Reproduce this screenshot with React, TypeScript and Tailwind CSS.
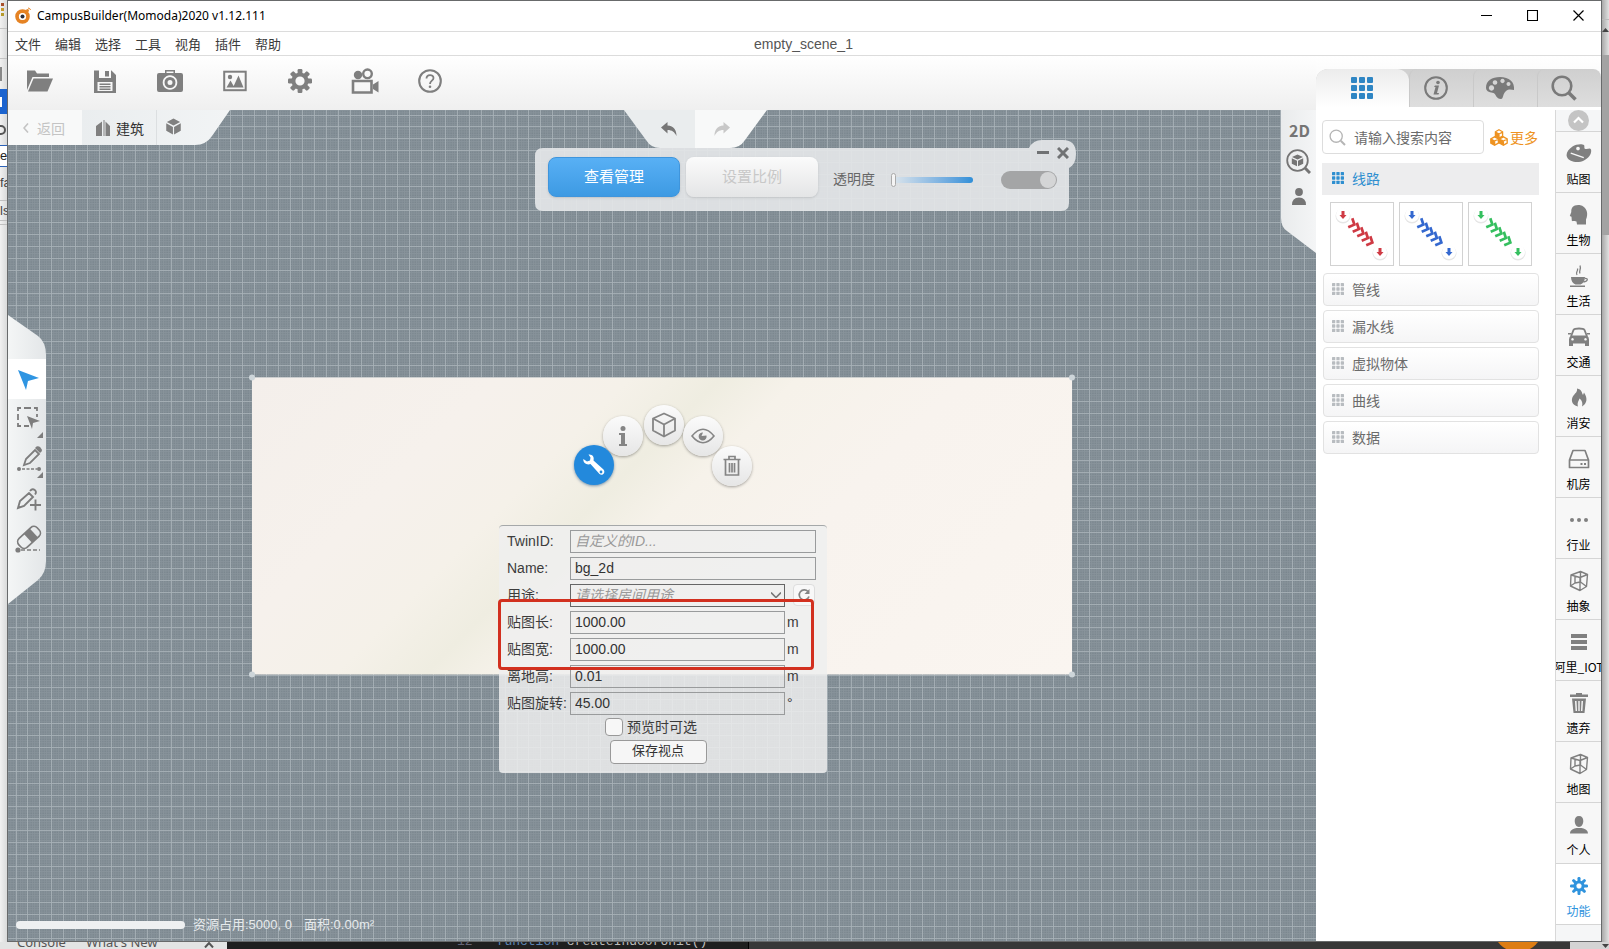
import type { ReactNode } from 'react'

const SANS = "font-['Liberation_Sans','Noto_Sans_CJK_SC',sans-serif]"
const CJK = "font-['Noto_Sans_CJK_SC',sans-serif]"

const MENUS = ['文件', '编辑', '选择', '工具', '视角', '插件', '帮助']
const SECTIONS = ['管线', '漏水线', '虚拟物体', '曲线', '数据']

type SvgProps = { w: number; h: number; children: ReactNode; className?: string; box?: string }

function Svg({ w, h, children, className, box }: SvgProps) {
  return (
    <svg width={w} height={h} viewBox={box ?? `0 0 ${w} ${h}`} fill="none" className={className} aria-hidden="true">
      {children}
    </svg>
  )
}

function Gear({ size, teeth = 8, hole = 4.6 }: { size: number; teeth?: number; hole?: number }) {
  return (
    <Svg w={size} h={size} box="0 0 24 24">
      {Array.from({ length: teeth }, (_, i) => (
        <rect key={i} x="9.6" y="0" width="4.8" height="6" rx="1.2" fill="currentColor" transform={`rotate(${(i * 360) / teeth} 12 12)`} />
      ))}
      <circle cx="12" cy="12" r={(hole + 8.6) / 2} stroke="currentColor" strokeWidth={8.6 - hole} />
    </Svg>
  )
}

function Dots({ size }: { size: number }) {
  return (
    <Svg w={size} h={size} box="0 0 22 22">
      {[0, 8, 16].flatMap((y) => [0, 8, 16].map((x) => <rect key={`${x}-${y}`} x={x} y={y} width="6" height="6" rx="1" fill="currentColor" />))}
    </Svg>
  )
}

function Cube({ size }: { size: number }) {
  return (
    <Svg w={size} h={size} box="0 0 18 18">
      <path d="M9 .5 16 4.2 9 8 2 4.2zM1.3 5.6 8.4 9.4v8L1.3 13.6zM16.7 5.6 9.6 9.4v8l7.1-3.8z" fill="currentColor" />
    </Svg>
  )
}

function WireCube() {
  return (
    <Svg w={20} h={22}>
      <path
        d="M2 5 11.500 1.500 18.500 4.500 17.500 16.500 11 20.500 1.500 16zM2 5l9 2.500 7.500-3M11 7.500v13M11.500 1.500V12L6 13V6M1.500 16l4.500-3M11.500 12l6 4.500"
        stroke="currentColor"
        strokeWidth="1.4"
        strokeLinejoin="round"
      />
    </Svg>
  )
}

function Trash({ w = 20, h = 22 }: { w?: number; h?: number }) {
  return (
    <Svg w={w} h={h} box="0 0 20 22">
      <path d="M1.500 4.500h17M7 4V1.500h6V4M3.500 5v15h13V5M7.500 8v9.500M10 8v9.500M12.500 8v9.500" stroke="currentColor" strokeWidth="1.7" />
    </Svg>
  )
}

function SolidTrash() {
  return (
    <Svg w={18} h={20}>
      <path fillRule="evenodd" d="M0 1.500h6V0h6v1.500h6V4H0zM2 5.500h14L14.500 20h-11zM5 8l.6 10H7L6.500 8zM8.300 8v10h1.400V8zM11.500 8 11 18h1.400L13 8z" fill="currentColor" />
    </Svg>
  )
}

function Lens({ size, stroke = 2.6 }: { size: number; stroke?: number }) {
  return (
    <Svg w={size} h={size} box="0 0 26 26">
      <circle cx="11" cy="11" r="9.300" stroke="currentColor" strokeWidth={stroke} />
      <path d="m18 18 6.500 6.500" stroke="currentColor" strokeWidth={stroke + 1} />
    </Svg>
  )
}

const TOOLS: { label: string; icon: ReactNode }[] = [
  {
    label: '打开',
    icon: (
      <Svg w={28} h={24}>
        <path d="M1 21V1.500h8l2 3h12V8H6.500z" fill="currentColor" />
        <path d="M7.500 9.500H27L21.500 22.500H2z" fill="currentColor" />
      </Svg>
    ),
  },
  {
    label: '保存',
    icon: (
      <Svg w={22} h={23}>
        <path fillRule="evenodd" d="M0 .5h17.500L22 5v18H0zM5 .5V8h12V.5zM3.500 12v9h15v-9z" fill="currentColor" />
        <path d="M11 1h4v5.500h-4zM5.500 13.500h11V15h-11zM5.500 16h11v1.500h-11zM5.500 18.500h11V20h-11z" fill="currentColor" />
      </Svg>
    ),
  },
  {
    label: '截图',
    icon: (
      <Svg w={26} h={24}>
        <path fillRule="evenodd" d="M2 4h6V1h10v3h6q2 0 2 2v15q0 2-2 2H2q-2 0-2-2V6q0-2 2-2zM9.500 2.500V4h7V2.500zM13 6.200a7.300 7.300 0 1 0 .01 0z" fill="currentColor" />
        <circle cx="13" cy="13.500" r="4" stroke="currentColor" strokeWidth="3" />
      </Svg>
    ),
  },
  {
    label: '图片',
    icon: (
      <Svg w={24} h={22}>
        <rect x="1.200" y="1.700" width="21.500" height="18.500" stroke="currentColor" strokeWidth="2" />
        <circle cx="7" cy="7" r="2.200" fill="currentColor" />
        <path d="m3.500 17.500 4-7 4 7zM10 17.500l5.500-12 5 12z" fill="currentColor" />
      </Svg>
    ),
  },
  { label: '设置', icon: <Gear size={24} /> },
  {
    label: '录像',
    icon: (
      <Svg w={28} h={26}>
        <circle cx="7" cy="7" r="4.200" fill="currentColor" />
        <circle cx="16.500" cy="5.800" r="4.300" stroke="currentColor" strokeWidth="2.400" />
        <path d="M2 13h18.500v11.500H2z" stroke="currentColor" strokeWidth="2.600" />
        <path d="M22 16.500 27.500 13v11.500L22 21z" fill="currentColor" />
      </Svg>
    ),
  },
  {
    label: '帮助',
    icon: (
      <Svg w={24} h={24}>
        <circle cx="12" cy="12" r="10.800" stroke="currentColor" strokeWidth="2.100" />
        <path d="M8.500 9.500C8.500 5 15.500 5 15.500 9c0 2.600-3.500 2.800-3.500 6" stroke="currentColor" strokeWidth="1.800" />
        <circle cx="12" cy="17.800" r="1.300" fill="currentColor" />
      </Svg>
    ),
  },
]

const RAIL: { label: string; icon: ReactNode }[] = [
  {
    label: '贴图',
    icon: (
      <Svg w={26} h={20}>
        <path fillRule="evenodd" d="M18 1c-2-1.500-8-1-11.500 1.500C2 5.500-.5 9.500 1 13c2 5 11 6.500 17 3.500 5-2.500 8-7 7-11-1-2-3 0-5.500-.5C17.500 4.500 19 2.500 18 1zM12 2.700a1.800 1.800 0 1 0 .01 0zM5 8.500l13 4.500-.5 1.200L4.500 9.700z" fill="currentColor" />
      </Svg>
    ),
  },
  {
    label: '生物',
    icon: (
      <Svg w={20} h={22}>
        <path d="M17 20.500V15.500c2.500-5 1.500-13-6.500-14.500C4 .5 2 4 2.300 8L.8 12l1.700.7.3 4c1.500 1 3.500.3 4.700.8l.5 3z" fill="currentColor" />
      </Svg>
    ),
  },
  {
    label: '生活',
    icon: (
      <Svg w={20} h={22}>
        <path d="M2 12h14c0 4-2 6.500-4.500 7.500h-5C4 18.500 2 16 2 12zM1 20.500h15V22H1z" fill="currentColor" />
        <path d="M16 13.500c3.500-.5 3 3-1.500 3.500M8 10c-2-3 1.500-3.500.5-6.500M11 8.500c-1.500-3 1.500-4 0-8" stroke="currentColor" strokeWidth="1.300" />
      </Svg>
    ),
  },
  {
    label: '交通',
    icon: (
      <Svg w={22} h={20}>
        <path d="M3 9.500 5.500 3q1-1.500 5.500-1.500T16.500 3L19 9.500" stroke="currentColor" strokeWidth="1.800" />
        <path fillRule="evenodd" d="M0 6h3v1.500H0zM19 6h3v1.500h-3zM3 8.500h16q2 1.500 2 4V19h-4v-2.500H5V19H1v-6.500q0-2.500 2-4zM4.500 11a1.300 1.300 0 1 0 .01 0zM17.500 11a1.300 1.300 0 1 0 .01 0z" fill="currentColor" />
      </Svg>
    ),
  },
  {
    label: '消安',
    icon: (
      <Svg w={18} h={22}>
        <path d="M7 1.500c5 1 4.500 4 6 6.500l1-2.500c4 6 3 11-2 14 1-3.500 0-6-2.500-8-1 3-2.500 4-1.500 8C1.500 18 .5 12.500 3.500 8.500 5.500 6 7.500 5 7 1.500z" fill="currentColor" />
      </Svg>
    ),
  },
  {
    label: '机房',
    icon: (
      <Svg w={22} h={20}>
        <path d="M1.500 11 5 1.500h12L20.500 11v7.500h-19zM1.500 11h19" stroke="currentColor" strokeWidth="1.700" strokeLinejoin="round" />
        <path d="M12.500 14h2v2h-2zM16 14h2v2h-2z" fill="currentColor" />
      </Svg>
    ),
  },
  {
    label: '行业',
    icon: (
      <Svg w={20} h={20}>
        <circle cx="3" cy="10" r="2" fill="currentColor" />
        <circle cx="10" cy="10" r="2" fill="currentColor" />
        <circle cx="17" cy="10" r="2" fill="currentColor" />
      </Svg>
    ),
  },
  { label: '抽象', icon: <WireCube /> },
  {
    label: '阿里_IOT',
    icon: (
      <Svg w={16} h={16}>
        <path d="M0 0h16v4H0zM0 6h16v4H0zM0 12h16v4H0z" fill="currentColor" />
      </Svg>
    ),
  },
  { label: '遗弃', icon: <SolidTrash /> },
  { label: '地图', icon: <WireCube /> },
  {
    label: '个人',
    icon: (
      <Svg w={20} h={20}>
        <path d="M10 1c3 0 4.300 2 4.300 5S12.500 12 10 12 5.700 9 5.700 6 7 1 10 1zM1 18.500c0-4 4-5 6.500-5.500h5c2.500.5 6.500 1.500 6.500 5.500z" fill="currentColor" />
      </Svg>
    ),
  },
  {
    label: '功能',
    icon: (
      <Svg w={20} h={20}>
        {[0, 45, 90, 135, 180, 225, 270, 315].map((a) => (
          <rect key={a} x="8.500" y="1" width="3" height="6.500" rx="1.200" fill="currentColor" transform={`rotate(${a} 10 10)`} />
        ))}
        <circle cx="10" cy="10" r="4.300" stroke="currentColor" strokeWidth="2.600" />
      </Svg>
    ),
  },
]

function Grid() {
  const cols = Array.from({ length: 240 }, (_, i) => Math.round(7.5 + i * 11.93))
  const rows = Array.from({ length: 140 }, (_, i) => Math.round(4.5 + i * 11.93))
  return (
    <svg className="absolute inset-0 h-full w-full" aria-hidden="true">
      <defs>
        <pattern id="fine" width="2.386" height="2.386" patternUnits="userSpaceOnUse">
          <path d="M0 .5h2.386M.5 0v2.386" stroke="#9ba5ac" strokeWidth="1" opacity=".42" />
        </pattern>
      </defs>
      <rect width="100%" height="100%" fill="#7a868e" />
      <rect width="100%" height="100%" fill="url(#fine)" />
      {cols.map((x) => (
        <rect key={`c${x}`} x={x} y="0" width="1" height="100%" fill="#a8b2b7" opacity=".85" />
      ))}
      {rows.map((y) => (
        <rect key={`r${y}`} x="0" y={y} width="100%" height="1" fill="#a8b2b7" opacity=".85" />
      ))}
    </svg>
  )
}

function Breadcrumb() {
  return (
    <nav className={`absolute left-0 top-0 flex h-[35px] w-[223px] bg-gradient-to-r from-[#e6eaec] to-[#f2f4f5] text-sm [clip-path:path('M0_0H222L204_26Q198_35_187_35H0Z')] ${CJK}`}>
      <button className="flex w-[74px] items-center gap-2 bg-[#f8f9f9] pl-[15px] text-[#c4c4c4]">
        <Svg w={6} h={10}>
          <path d="M5 .5 1 5l4 4.500" stroke="currentColor" strokeWidth="1.600" />
        </Svg>
        返回
      </button>
      <button className="flex items-center gap-1.5 pl-3.5 text-[#333]">
        <Svg w={14} h={16} className="text-[#808080]">
          <path d="M0 16V6l6-4.500V16zM7.500 0h1v16h-1zM9.500 1.500 14 6v10H9.500z" fill="currentColor" />
        </Svg>
        建筑
      </button>
      <button aria-label="物体" className="ml-3 flex items-center border-l border-[#dcdfe1] pb-0.5 pl-2 text-[#808080]">
        <Cube size={17} />
      </button>
    </nav>
  )
}

function UndoRedo() {
  const arrow = 'M6.500 0v3.500C13 4 15.500 8 15.500 14 13.500 10 11 8 6.500 8v3.500L0 5.500z'
  return (
    <div className="absolute left-1/2 top-0 -ml-[38px] flex h-[38px] w-[143px] [clip-path:path('M0_0H143L121_30Q116_38_106_38H36Q27_38_22_30Z')]">
      <button aria-label="撤销" className="flex w-[71px] items-center justify-end bg-[#eaedee] pr-[17px] text-[#777]">
        <Svg w={17} h={14}>
          <path d={arrow} fill="currentColor" />
        </Svg>
      </button>
      <button aria-label="重做" className="flex flex-1 items-center bg-[#f8f9f9] pl-[18px] text-[#c8c8c8]">
        <Svg w={17} h={14} className="-scale-x-100">
          <path d={arrow} fill="currentColor" />
        </Svg>
      </button>
    </div>
  )
}

function SceneBar() {
  return (
    <div
      className={`absolute left-1/2 top-[30px] -ml-[127px] flex h-[71px] w-[542px] items-center bg-[#e4e6e8]/92 pl-[13px] pt-2 text-sm [clip-path:path('M8_8H494Q498_0_507_0H528Q541_0_541_14Q541_24_534_28V63Q534_71_526_71H8Q0_71_0_63V16Q0_8_8_8Z')] ${CJK}`}
    >
      <div className="flex gap-1.5 pb-1.5 text-[15px]">
        <button className="h-10 w-[132px] rounded-lg border border-[#3f95dc] bg-gradient-to-b from-[#58b0f5] to-[#3d9ae3] pb-0.5 text-white shadow-sm">查看管理</button>
        <button className="h-10 w-[132px] rounded-lg bg-gradient-to-b from-[#fbfbfb] to-[#e4e5e6] pb-0.5 text-[#c8c8c8] shadow-sm">设置比例</button>
      </div>
      <label htmlFor="opacity" className="ml-[15px] pb-1 text-[#666]">
        透明度
      </label>
      <input
        id="opacity"
        type="range"
        defaultValue={0}
        className="ml-4 h-4 w-[82px] appearance-none bg-transparent [&::-webkit-slider-runnable-track]:h-1.5 [&::-webkit-slider-runnable-track]:rounded-full [&::-webkit-slider-runnable-track]:bg-gradient-to-r [&::-webkit-slider-runnable-track]:from-[#dfe6eb] [&::-webkit-slider-runnable-track]:to-[#2f8fd8] [&::-webkit-slider-thumb]:-mt-1 [&::-webkit-slider-thumb]:h-3.5 [&::-webkit-slider-thumb]:w-[5px] [&::-webkit-slider-thumb]:appearance-none [&::-webkit-slider-thumb]:rounded-sm [&::-webkit-slider-thumb]:border [&::-webkit-slider-thumb]:border-[#aaa] [&::-webkit-slider-thumb]:bg-[#f4f4f4]"
      />
      <input
        type="checkbox"
        role="switch"
        aria-label="显示"
        defaultChecked
        className="ml-7 flex h-[18px] w-14 appearance-none justify-end rounded-full bg-[#a4a5a6] p-px before:h-4 before:w-4 before:rounded-full before:bg-[#d4d5d6]"
      />
      <div className="absolute right-2 top-[7px] flex items-center gap-2 text-[#707274]">
        <button aria-label="最小化面板">
          <Svg w={12} h={12}>
            <path d="M0 5.500h12" stroke="currentColor" strokeWidth="3" />
          </Svg>
        </button>
        <button aria-label="关闭面板">
          <Svg w={12} h={12}>
            <path d="m1 1 10 10M11 1 1 11" stroke="currentColor" strokeWidth="3" />
          </Svg>
        </button>
      </div>
    </div>
  )
}

function SideTools() {
  return (
    <div className="absolute left-0 top-[205px] flex h-[289px] w-[38px] flex-col bg-gradient-to-r from-[#f4f6f6] to-[#e3e6e8] pt-11 text-[#7d7d7d] [clip-path:path('M0_0L30_21Q38_27_38_40V246Q38_258_30_265L0_289Z')]">
      <button aria-label="选择" className="flex h-10 justify-center bg-white pt-2.5 text-[#2f95e2]">
        <Svg w={22} h={22} className="ml-1">
          <path d="M0 1 21 9 10 12 8 21z" fill="currentColor" />
        </Svg>
      </button>
      <button aria-label="框选" className="flex h-10 pl-1">
        <Svg w={34} h={40}>
          <path d="M6 12V9h3M12 9h7M22 9h3v3M6 15v6M6 24v3h3M12 27h5M25 15v3" stroke="currentColor" strokeWidth="1.800" />
          <path d="m15 17 13 5-7 2-1 6z" fill="currentColor" />
          <path d="M31 33v6h-6z" fill="currentColor" />
        </Svg>
      </button>
      <button aria-label="画线" className="flex h-10 pl-1">
        <Svg w={34} h={40}>
          <path d="m12 26 2-6 9-9 4 4-9 9z" stroke="currentColor" strokeWidth="1.800" />
          <path d="m23 9 1.500-1.500q2-1 4 1t1 4L28 14z" fill="currentColor" />
          <circle cx="7" cy="30" r="2" fill="currentColor" />
          <circle cx="27" cy="30" r="2" fill="currentColor" />
          <path d="M10 30h15" stroke="currentColor" strokeWidth="1.600" strokeDasharray="3 1.500" />
          <path d="M31 33v6h-6z" fill="currentColor" />
        </Svg>
      </button>
      <button aria-label="添加点" className="flex h-10 pl-1">
        <Svg w={34} h={40}>
          <path d="m6 29 2-7 9-8 4 4-9 9zM18 12c3-4 8 0 5 3.500M18 26h11M23.500 20.500v11" stroke="currentColor" strokeWidth="1.900" />
        </Svg>
      </button>
      <button aria-label="擦除" className="flex h-10 pl-1">
        <Svg w={34} h={40}>
          <g transform="rotate(-43 16 18)">
            <rect x="4" y="13" width="25" height="12" rx="4.500" stroke="currentColor" strokeWidth="1.700" />
            <path d="M15 13h8v12h-8z" fill="currentColor" />
          </g>
          <circle cx="6" cy="31" r="2.600" fill="currentColor" />
          <path d="M9 31h19" stroke="currentColor" strokeWidth="1.700" strokeDasharray="4 2" />
        </Svg>
      </button>
    </div>
  )
}

function ViewTools() {
  return (
    <div className={`absolute right-0 top-0 flex h-[143px] w-[35px] flex-col items-center bg-gradient-to-r from-[#e9ebec] to-[#f4f5f6] pt-2 text-[#757575] [clip-path:path('M0_0H35V143L6_121Q0_117_0_108Z')] ${CJK}`}>
      <button className="h-6 pl-0.5 text-base leading-6 font-bold">2D</button>
      <button aria-label="查找物体" className="mt-[7px]">
        <Svg w={25} h={25}>
          <circle cx="11.500" cy="11.500" r="10.300" stroke="currentColor" strokeWidth="1.800" />
          <path d="M11.500 5.500 17 8l-5.500 2.500L6 8zM5.800 9.300l5.200 2.400v5.600l-5.200-2.500zM17.200 9.300 12 11.700v5.600l5.200-2.500z" fill="currentColor" />
          <path d="m19 19 5 5" stroke="currentColor" strokeWidth="3" />
        </Svg>
      </button>
      <button aria-label="第一人称" className="mt-3.5">
        <Svg w={16} h={17}>
          <circle cx="8" cy="4" r="3.900" fill="currentColor" />
          <path d="M1 17q0-7.500 7-7.500t7 7.500z" fill="currentColor" />
        </Svg>
      </button>
    </div>
  )
}

// Positions on the ring, from the centre of the canvas
const RING: { label: string; x: number; y: number; icon: ReactNode }[] = [
  {
    label: '信息',
    x: -39,
    y: -90,
    icon: (
      <Svg w={10} h={20}>
        <circle cx="5" cy="2.500" r="2.500" fill="currentColor" />
        <path d="M1 7h6v11h2v2H1v-2h2V9H1z" fill="currentColor" />
      </Svg>
    ),
  },
  {
    label: '模型',
    x: 2,
    y: -101,
    icon: (
      <Svg w={24} h={26}>
        <path d="M12 1.500 23 6.500v12L12 24.500 1 18.500v-12zM1 6.500l11 6 11-6M12 12.500v12" stroke="currentColor" strokeWidth="1.800" strokeLinejoin="round" />
      </Svg>
    ),
  },
  {
    label: '显示',
    x: 41,
    y: -90,
    icon: (
      <Svg w={24} h={16}>
        <path d="M1 8q11-13.500 22 0-11 13.500-22 0z" stroke="currentColor" strokeWidth="1.600" />
        <path d="M12 4.500 10.500 8 15.500 7.500a4 4 0 1 1-3.500-3z" fill="currentColor" />
      </Svg>
    ),
  },
  { label: '删除', x: 70, y: -60, icon: <Trash w={20} h={22} /> },
]

function RingMenu() {
  return (
    <>
      {RING.map((r) => (
        <button
          key={r.label}
          aria-label={r.label}
          className="absolute left-1/2 top-1/2 flex h-10 w-10 items-center justify-center rounded-full bg-gradient-to-b from-[#fbfbfb] to-[#e6e6e6] text-[#858585] shadow-[0_1px_3px_rgba(0,0,0,0.35)]"
          style={{ marginLeft: r.x - 20, marginTop: r.y - 20 }}
        >
          {r.icon}
        </button>
      ))}
      <button aria-label="属性" className="absolute left-1/2 top-1/2 -ml-[88px] -mt-[81px] flex h-10 w-10 items-center justify-center rounded-full bg-[#2389dc] text-white shadow-[0_1px_3px_rgba(0,60,120,0.5)]">
        <Svg w={24} h={24}>
          <path
            d="M6.500 1.500C10.500 1 12.500 4 11.500 7.500L21.500 16.500C24 19.500 20.500 23.500 17.500 21L8.500 11C5 12.500 1 10 1.300 6L5 8.500 8 7.500 8.500 4.500z"
            fill="currentColor"
          />
          <circle cx="19" cy="19" r="1.400" fill="#2389dc" />
        </Svg>
      </button>
    </>
  )
}

const FIELD = 'h-[23px] min-w-0 border border-[#999b9c] bg-transparent px-1 text-sm text-[#333] outline-none placeholder:italic placeholder:text-[#999]'

function Field({ id, label, value, unit }: { id: string; label: string; value: string; unit: string }) {
  return (
    <>
      <label htmlFor={id} className="whitespace-nowrap">
        {label}
      </label>
      <input id={id} defaultValue={value} className={FIELD} />
      <span className="pl-0.5">{unit}</span>
    </>
  )
}

function Properties() {
  return (
    <form className={`absolute left-1/2 top-1/2 -ml-[163px] -mt-px h-[248px] w-[328px] rounded border-t border-[#a5a8a9] bg-[#efefef]/85 px-2 pt-1 text-sm text-[#3c3c3c] ${SANS}`}>
      <div className="grid auto-rows-[23px] grid-cols-[63px_215px_31px] items-center gap-y-1">
        <label htmlFor="twin">TwinID:</label>
        <input id="twin" placeholder="自定义的ID..." className={`col-span-2 ${FIELD}`} />
        <label htmlFor="name">Name:</label>
        <input id="name" defaultValue="bg_2d" className={`col-span-2 ${FIELD}`} />
        <label htmlFor="usage">用途:</label>
        <div className="relative flex">
          <select id="usage" className="h-[23px] w-full appearance-none border border-[#666] px-1 text-sm text-[#999] italic outline-none">
            <option>请选择房间用途</option>
          </select>
          <Svg w={10} h={6} className="absolute right-1 top-2 text-[#777]">
            <path d="m0 .5 5 5 5-5" stroke="currentColor" strokeWidth="1.600" />
          </Svg>
        </div>
        <button type="button" aria-label="刷新" className="ml-2 flex h-[22px] w-[22px] items-center justify-center rounded border border-[#ddd] bg-[#f8f8f8] text-[#858585]">
          <Svg w={14} h={14}>
            <path d="M11 3.500A5 5 0 1 0 12 8.500" stroke="currentColor" strokeWidth="1.700" />
            <path d="M12.500 1v5h-5z" fill="currentColor" />
          </Svg>
        </button>
        <Field id="len" label="贴图长:" value="1000.00" unit="m" />
        <Field id="wid" label="贴图宽:" value="1000.00" unit="m" />
        <Field id="ele" label="离地高:" value="0.01" unit="m" />
        <Field id="rot" label="贴图旋转:" value="45.00" unit="°" />
      </div>
      <label className="mt-[3px] flex h-[18px] items-center justify-center gap-1 pr-6">
        <input type="checkbox" className="h-[18px] w-[18px] appearance-none rounded-sm border border-[#999] bg-[#f7f7f7]" />
        预览时可选
      </label>
      <div className="mt-1 flex justify-center pr-2.5">
        <button type="button" className="h-6 w-[97px] rounded-sm border border-[#999] bg-[#f6f6f6] text-[13px] text-[#333]">
          保存视点
        </button>
      </div>
      <div className="pointer-events-none absolute -left-px top-[73px] h-[71px] w-[316px] rounded-sm border-3 border-[#d2301f]" />
    </form>
  )
}

function Viewport() {
  return (
    <main className="relative min-h-0 flex-1 overflow-hidden">
      <Grid />
      <div className="absolute left-1/2 top-1/2 h-[297px] w-[820px] -translate-x-1/2 -translate-y-1/2 bg-[linear-gradient(135deg,#f4efeb_0%,#f6f1ec_22%,#f5f1e9_34%,#efede1_42%,#f6f2ea_49%,#f8f3ee_64%,#faf5f0_100%)]">
        <i className="absolute -left-[3px] -top-[3px] h-1.5 w-1.5 rounded-full bg-[#cdd5d9]" />
        <i className="absolute -right-[3px] -top-[3px] h-1.5 w-1.5 rounded-full bg-[#cdd5d9]" />
        <i className="absolute -bottom-[3px] -left-[3px] h-1.5 w-1.5 rounded-full bg-[#cdd5d9]" />
        <i className="absolute -bottom-[3px] -right-[3px] h-1.5 w-1.5 rounded-full bg-[#cdd5d9]" />
      </div>
      <Breadcrumb />
      <UndoRedo />
      <SceneBar />
      <SideTools />
      <ViewTools />
      <RingMenu />
      <Properties />
      <div className={`absolute bottom-1.5 left-2 flex items-center text-[13px] leading-5 text-[#e6eaec] ${SANS}`}>
        <div className="h-2 w-[169px] rounded-full bg-[#eef0f1]" />
        <span className="ml-2">资源占用:5000, 0</span>
        <span className="ml-3">面积:0.00m²</span>
      </div>
    </main>
  )
}

function LineTile({ label, color }: { label: string; color: string }) {
  return (
    <button aria-label={label} className="h-16 w-16 border border-[#d2d2d2] bg-white">
      <Svg w={62} h={62}>
        {[12, 49].map((p) => (
          <g key={p}>
            <circle cx={p} cy={p + 1} r="7.500" fill="#e6e6e6" />
            <circle cx={p} cy={p} r="7" fill="#fff" />
            <path d={`M${p - 1.5} ${p - 4}h3v4h2l-3.500 4-3.500-4h2z`} fill={color} />
          </g>
        ))}
        {[0, 1, 2, 3, 4].map((i) => (
          <path key={i} d="m-3-5 4.500 5-4.500 5" transform={`translate(${22 + i * 4.5} ${21 + i * 4.5}) rotate(24)`} stroke={color} strokeWidth="2.700" />
        ))}
      </Svg>
    </button>
  )
}

const TAB = 'flex flex-1 items-center justify-center rounded-t-lg border-l border-[#c9c9c9] bg-gradient-to-b from-[#cfcfcf] to-[#dedede] pr-3 text-[#7a7a7a]'

function Library() {
  return (
    <aside className="flex w-[285px] shrink-0 flex-col bg-white">
      <div className="flex h-[51px] bg-gradient-to-b from-white to-[#f3f3f3] pt-[13px]">
        <div className="flex flex-1 rounded-t-xl bg-[#d0d0d0]">
          <button aria-label="资源库" className="flex w-[93px] items-center justify-center rounded-t-xl bg-gradient-to-b from-[#ececec] to-white pr-px text-[#2f86c4]">
            <Dots size={22} />
          </button>
          <button aria-label="信息" className={TAB}>
            <Svg w={24} h={24}>
              <circle cx="12" cy="12" r="10.800" stroke="currentColor" strokeWidth="2.100" />
              <path d="M11 9.500h4L13 17h2l-.5 1.500h-5l2-7.500H10z" fill="currentColor" />
              <circle cx="14" cy="6.500" r="1.800" fill="currentColor" />
            </Svg>
          </button>
          <button aria-label="材质" className={TAB}>
            <Svg w={30} h={24}>
              <path
                fillRule="evenodd"
                d="M15 1C7 1 1 5 1 11.500c0 5 5 4.500 7.500 5.500S11 23 16 23c2.500 0 1.500-5 5-8 3-2.500 6-1 8-1C30 6 24 1 15 1zM6.500 9.300a2.700 2.700 0 1 0 .01 0zM10 4.200a2.300 2.300 0 1 0 .01 0zM17.500 2.800a2.200 2.200 0 1 0 .01 0zM23.500 6a2 2 0 1 0 .01 0z"
                fill="currentColor"
              />
            </Svg>
          </button>
          <button aria-label="搜索" className={TAB}>
            <Lens size={26} />
          </button>
        </div>
      </div>
      <div className="flex min-h-0 flex-1 pt-[3px]">
        <div className={`flex-1 pl-1.5 pr-4 pt-2.5 text-sm ${CJK}`}>
          <div className="flex items-center">
            <label className="flex h-[34px] w-[162px] items-center rounded border border-[#ddd] pl-1.5 text-[#b5b5b5]">
              <Lens size={17} stroke={2} />
              <input aria-label="搜索" placeholder="请输入搜索内容" className="ml-2 w-[120px] outline-none placeholder:text-[#6b6b6b]" />
            </label>
            <a href="#more" className="ml-1.5 flex items-center gap-0.5 text-[#ee9322]">
              <Svg w={18} h={17}>
                <path d="M5.400 2.800 9 5v4L5.400 7.200zM.8 9.800 4.600 12v4.200L.8 14.200zM9.600 9.800l3.800 2.200v4.200l-3.800-2z" fill="currentColor" />
                <path d="m9 .8 3.600 2v4.400L9 9 5.400 7.200V2.800zM4.600 7.800l3.800 2v4.400l-3.800 2-3.800-2V9.800zM13.400 7.800l3.800 2v4.400l-3.800 2-3.800-2V9.800zM5.400 3 9 5l3.600-2M9 5v4M1 10l3.600 2L8.400 10M4.600 12v4M9.600 10l3.800 2 3.800-2M13.400 12v4" stroke="currentColor" strokeWidth="1.300" />
              </Svg>
              更多
            </a>
          </div>
          <button className="mt-[9px] flex h-8 w-full items-center gap-2 bg-[#ededee] pb-0.5 pl-2.5 text-[#2f8fd0]">
            <Dots size={12} />
            线路
          </button>
          <div className="my-[7px] flex gap-[5px] pl-2">
            <LineTile label="红色线路" color="#cf3a44" />
            <LineTile label="蓝色线路" color="#3468cf" />
            <LineTile label="绿色线路" color="#35bf5f" />
          </div>
          <div className="flex flex-col gap-1 pl-px">
            {SECTIONS.map((s) => (
              <button key={s} className="flex h-[33px] items-center gap-2 rounded-sm border border-[#e2e2e2] bg-gradient-to-b from-white to-[#f5f5f6] pb-0.5 pl-2 text-[#6b6b6b]">
                <span className="text-[#b8bcc0]">
                  <Dots size={12} />
                </span>
                {s}
              </button>
            ))}
          </div>
        </div>
        <div className={`flex w-[46px] flex-col border-l border-[#d8d8d8] bg-[#f5f6f7] text-xs text-black ${CJK}`}>
          <button aria-label="向上" className="flex h-[21px] justify-center">
            <Svg w={21} h={21}>
              <circle cx="10.500" cy="10.500" r="10.500" fill="#c4c4c4" />
              <path d="m6 12.500 4.500-4.500 4.500 4.500" stroke="#fff" strokeWidth="2.200" />
            </Svg>
          </button>
          {RAIL.map((r) => (
            <button
              key={r.label}
              className={`flex h-[61px] flex-col items-center overflow-hidden border-t border-[#d5d5d5] ${r.label === '功能' ? 'bg-white text-[#2f93dd]' : 'bg-[#f7f7f7]'}`}
            >
              <span className={`flex h-11 items-center ${r.label === '功能' ? '' : 'text-[#808080]'}`}>{r.icon}</span>
              <span className="-mt-[5px] leading-4 whitespace-nowrap">{r.label}</span>
            </button>
          ))}
          <div className="border-t border-[#d5d5d5]" />
        </div>
      </div>
    </aside>
  )
}

function TitleBar() {
  return (
    <header className="flex h-[31px] items-center border-b border-[#dcdcdc] bg-white pb-px pl-[7px] font-['Noto_Sans',sans-serif] text-black">
      <Svg w={16} h={17}>
        <circle cx="7.500" cy="9.500" r="5.300" stroke="#e58324" strokeWidth="4" />
        <circle cx="7.500" cy="9.500" r="3.600" fill="#fff" />
        <circle cx="7.500" cy="9.500" r="2" fill="#2a2f3d" />
        <circle cx="12.500" cy="3.500" r="1.500" fill="#e58324" />
        <path d="M13 1q2 0 2.500 2" stroke="#e58324" />
      </Svg>
      <h1 className="ml-1.5 flex-1 text-xs">CampusBuilder(Momoda)2020 v1.12.111</h1>
      <div className="flex">
        <button aria-label="最小化" className="flex w-[45px] justify-center">
          <Svg w={11} h={11}>
            <path d="M0 5.500h11" stroke="#000" />
          </Svg>
        </button>
        <button aria-label="最大化" className="flex w-[46px] justify-center">
          <Svg w={11} h={11}>
            <path d="M.5.500h10v10H.5z" stroke="#000" strokeWidth="1.200" />
          </Svg>
        </button>
        <button aria-label="关闭" className="flex w-[46px] justify-center">
          <Svg w={11} h={11}>
            <path d="m.5.500 10 10M10.500.500l-10 10" stroke="#000" strokeWidth="1.200" />
          </Svg>
        </button>
      </div>
    </header>
  )
}

function BehindLeft() {
  return (
    <div className="flex w-[7px] shrink-0 flex-col overflow-hidden bg-gradient-to-r from-[#f1f1f1] to-[#d9dada] text-[13px] text-[#444]">
      <div className="flex h-7 flex-col gap-0.5 pl-px pt-[3px]">
        <i className="h-[3px] w-[3px] bg-[#a8502c]" />
        <i className="h-[3px] w-[3px] bg-[#c79a2e]" />
        <i className="h-[3px] w-[3px] bg-[#b59a2c]" />
      </div>
      <div className="h-[31px] border-y border-[#c4c4c4]" />
      <div className="h-[30px] py-2">
        <i className="block h-3.5 w-0.5 bg-[#888]" />
      </div>
      <div className="flex h-[25px] items-center bg-[#1c64cf]">
        <i className="h-2.5 w-0.5 bg-white" />
      </div>
      <div className="flex h-[31px] items-center">
        <i className="-ml-1 h-2.5 w-2.5 shrink-0 rounded-full border-2 border-[#555]" />
      </div>
      <div className="h-[22px] border-y border-[#2b62b8] bg-white leading-5 text-[#222]">er</div>
      <div className="h-[33px] leading-8">fa</div>
      <div className="h-[21px] border-y border-[#c0c0c0] leading-5">ls</div>
      <div className="h-1 border-b border-[#c0c0c0]" />
    </div>
  )
}

function BehindRight() {
  return (
    <div className="flex w-[7px] shrink-0 flex-col bg-gradient-to-r from-[#a9a9a9] to-[#e2e2e2]">
      <div className="h-5 border-b border-[#bbb]" />
      <div className="flex h-[35px] items-start justify-end pt-2">
        <Svg w={7} h={4}>
          <path d="M0 4 3.500 0 7 4z" fill="#444" />
        </Svg>
      </div>
      <div className="h-[180px] bg-[#a3a3a3]" />
    </div>
  )
}

function BehindBottom() {
  return (
    <div className="flex h-[7px] shrink-0 items-end overflow-hidden bg-[#1f1f1f] text-[13px] leading-[14px] text-[#555]">
      <div className="flex h-full w-[227px] items-end bg-[#e3e4e4] pl-[17px] font-['Noto_Sans',sans-serif]">
        <span>Console</span>
        <span className="ml-5">What's New</span>
        <Svg w={10} h={6} className="mb-px ml-[46px]">
          <path d="m1 5.500 4-4.500 4 4.500" stroke="#555" strokeWidth="2" />
        </Svg>
      </div>
      <div className="flex h-full w-[522px] items-end border-r border-black pl-[230px] font-['Liberation_Mono',monospace] text-[#bbb]">
        <span className="mr-6 text-[#667]">12</span>
        <span className="whitespace-pre">
          <span className="text-[#5d86b5]">function</span> createIndoorUnit()
        </span>
      </div>
      <div className="flex h-full flex-1 items-end justify-end overflow-hidden bg-[#383838] pr-[27px]">
        <i className="-mb-[3px] h-[50px] w-[50px] shrink-0 rounded-full bg-[#dd7d14]" />
      </div>
      <div className="flex h-full w-[39px] items-end justify-end bg-[#d4d4d4]">
        <Svg w={7} h={4} className="mb-px">
          <path d="M0 0h7L3.500 4z" fill="#444" />
        </Svg>
      </div>
    </div>
  )
}

export default function App() {
  return (
    <div className={`flex h-screen flex-col overflow-hidden ${SANS}`}>
      <div className="flex min-h-0 flex-1">
        <BehindLeft />
        <div className="flex min-w-0 flex-1 flex-col border border-[#686a6b] bg-white">
          <TitleBar />
          <div className="relative flex h-6 shrink-0 items-center justify-center border-b border-[#dcdcdc] pr-0.5">
            <nav className={`absolute left-[7px] flex gap-[14px] text-[13px] text-[#3a3a3a] ${CJK}`}>
              {MENUS.map((m) => (
                <button key={m}>{m}</button>
              ))}
            </nav>
            <span className="text-sm text-[#555]">empty_scene_1</span>
          </div>
          <div className="flex min-h-0 flex-1">
            <div className="flex min-w-0 flex-1 flex-col">
              <div className="flex h-[54px] shrink-0 bg-gradient-to-b from-white to-[#efefef] text-[#7f7f7f]">
                {TOOLS.map((t) => (
                  <button key={t.label} aria-label={t.label} className="flex w-[65px] items-center justify-center pb-1 pr-0.5">
                    {t.icon}
                  </button>
                ))}
              </div>
              <Viewport />
            </div>
            <Library />
          </div>
        </div>
        <BehindRight />
      </div>
      <BehindBottom />
    </div>
  )
}
